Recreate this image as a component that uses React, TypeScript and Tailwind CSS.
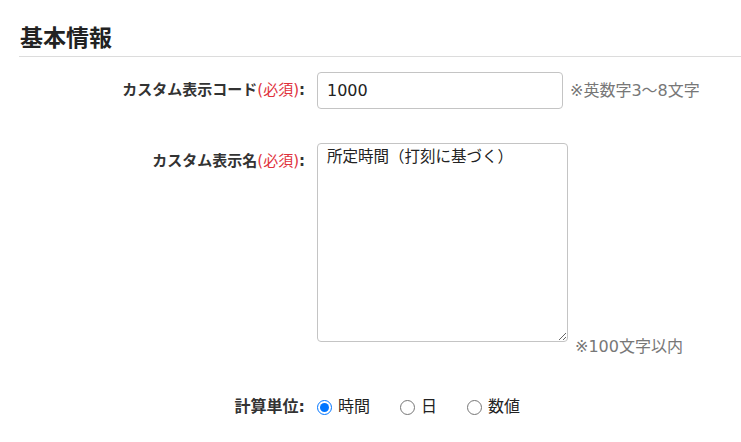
import React, { useState } from 'react';

const font = { fontFamily: '"DejaVu Sans", "Noto Sans CJK JP", sans-serif' };

const Required = () => <span className="font-normal text-[#e0323c]">(必須)</span>;

export default function App() {
  const [code, setCode] = useState('1000');
  const [name, setName] = useState('所定時間（打刻に基づく）');
  const [unit, setUnit] = useState('hour');

  const units = [
    { value: 'hour', label: '時間' },
    { value: 'day', label: '日' },
    { value: 'number', label: '数値' },
  ];

  return (
    <div className="min-h-screen bg-white pl-[19px] text-[#333]" style={font}>
      {/* Section title */}
      <h2 className="border-b border-[#dcdcdc] pt-[22px] pb-[1px] pl-[1px] text-[23px] font-bold leading-[33px] text-[#222]">
        基本情報
      </h2>

      <div className="grid grid-cols-[286px_1fr] gap-x-[12px] pt-[15px]">
        {/* Custom display code */}
        <div className="flex items-center justify-end text-[15px] font-bold">
          カスタム表示コード<Required />:
        </div>
        <div className="flex items-center">
          <input
            value={code}
            onChange={(e) => setCode(e.target.value)}
            className="h-[37px] w-[246px] rounded-[4px] border border-[#c4c4c4] px-[9px] text-[16px] text-[#222] outline-none"
            style={font}
          />
          <span className="ml-[7px] text-[16px] text-[#777]">※英数字3〜8文字</span>
        </div>

        {/* Custom display name */}
        <div className="mt-[34px] flex justify-end pt-[7px] text-[15px] font-bold leading-[22px]">
          カスタム表示名<Required />:
        </div>
        <div className="mt-[34px] flex items-end">
          <textarea
            value={name}
            onChange={(e) => setName(e.target.value)}
            className="h-[199px] w-[251px] rounded-[4px] border border-[#c4c4c4] px-[9px] pt-[2px] text-[15.5px] leading-[22px] text-[#222] outline-none"
            style={font}
          />
          <span className="mb-[-16px] ml-[7px] text-[16px] leading-[22px] text-[#777]">※100文字以内</span>
        </div>

        {/* Calculation unit */}
        <div className="mt-[53px] flex h-[24px] items-center justify-end text-[16px] font-bold">
          計算単位:
        </div>
        <div className="mt-[53px] flex h-[24px] items-center text-[16px] text-[#222]">
          {units.map((u) => (
            <label key={u.value} className="mr-[30px] flex cursor-pointer items-center gap-[6px]">
              <input
                type="radio"
                name="unit"
                checked={unit === u.value}
                onChange={() => setUnit(u.value)}
                className="m-0 h-[15px] w-[15px] accent-[#0075ff]"
              />
              {u.label}
            </label>
          ))}
        </div>
      </div>
    </div>
  );
}
